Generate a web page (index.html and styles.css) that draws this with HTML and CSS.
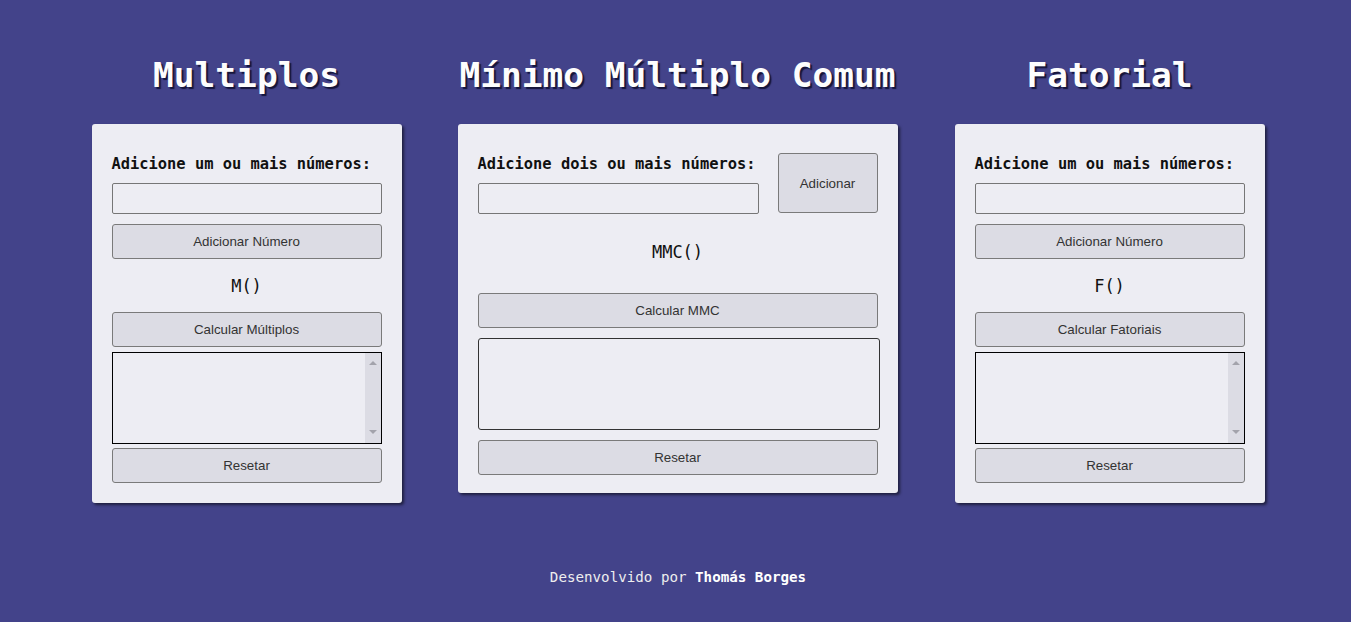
FILE: index.html
```html
<!DOCTYPE html>
<html lang="pt-BR">
<head>
<meta charset="utf-8">
<title>Calculadoras</title>
<link rel="stylesheet" href="styles.css">
</head>
<body>
<main class="page">
  <div class="columns">
    <section class="column">
      <h1 class="title">Multiplos</h1>
      <div class="card card-narrow">
        <label class="label">Adicione um ou mais números:</label>
        <input class="field" type="text">
        <button class="btn btn-add">Adicionar Número</button>
        <p class="expr">M()</p>
        <button class="btn">Calcular Múltiplos</button>
        <div class="result-box">
          <textarea class="result-area"></textarea>
          <div class="scrollbar"><span class="arrow arrow-up"></span><span class="arrow arrow-down"></span></div>
        </div>
        <button class="btn">Resetar</button>
      </div>
    </section>
    <section class="column">
      <h1 class="title">Mínimo Múltiplo Comum</h1>
      <div class="card card-wide">
        <div class="row">
          <div class="row-left">
            <label class="label">Adicione dois ou mais números:</label>
            <input class="field" type="text">
          </div>
          <button class="btn btn-square">Adicionar</button>
        </div>
        <p class="expr expr-mmc">MMC()</p>
        <button class="btn">Calcular MMC</button>
        <textarea class="result-round"></textarea>
        <button class="btn">Resetar</button>
      </div>
    </section>
    <section class="column column-last">
      <h1 class="title">Fatorial</h1>
      <div class="card card-narrow">
        <label class="label">Adicione um ou mais números:</label>
        <input class="field" type="text">
        <button class="btn btn-add">Adicionar Número</button>
        <p class="expr">F()</p>
        <button class="btn">Calcular Fatoriais</button>
        <div class="result-box">
          <textarea class="result-area"></textarea>
          <div class="scrollbar"><span class="arrow arrow-up"></span><span class="arrow arrow-down"></span></div>
        </div>
        <button class="btn">Resetar</button>
      </div>
    </section>
  </div>
  <footer class="footer">Desenvolvido por <strong class="author">Thomás Borges</strong></footer>
</main>
</body>
</html>
```
FILE: styles.css
```css
* { box-sizing: border-box; }
html, body { margin: 0; padding: 0; }
body {
  background: #43438a;
  font-family: "DejaVu Sans Mono", "Liberation Mono", monospace;
  height: 622px;
  overflow: hidden;
}
.page {
  padding: 55px 0 0 5px;
}
.columns {
  display: flex;
  justify-content: center;
  align-items: flex-start;
  gap: 56px;
}
.column {
  display: flex;
  flex-direction: column;
  align-items: center;
}
.column-last { margin-left: 1px; }
.title {
  margin: 0 0 29px;
  font-size: 34.5px;
  line-height: 40px;
  font-weight: bold;
  color: #fdfdfd;
  text-shadow: 2px 2px 1px #15153a;
  white-space: nowrap;
}
.card {
  background: #ededf3;
  border-radius: 3px;
  box-shadow: 2px 2px 3px rgba(0,0,0,0.55);
  display: flex;
  flex-direction: column;
}
.card-narrow {
  width: 310px;
  padding: 31px 20px 20px;
}
.card-wide {
  width: 440px;
  padding: 29px 20px 18px;
}
.label {
  display: block;
  font-size: 15.4px;
  line-height: 18px;
  font-weight: bold;
  color: #111;
  white-space: nowrap;
}
.field {
  display: block;
  width: 100%;
  height: 31px;
  margin-top: 10px;
  background: #ededf3;
  border: 1px solid #767676;
  border-radius: 2px;
  font-family: "Liberation Sans", Arial, sans-serif;
}
.btn {
  display: block;
  width: 100%;
  height: 35px;
  background: #dcdce4;
  border: 1px solid #7a7a7a;
  border-radius: 3px;
  font-family: "Liberation Sans", Arial, sans-serif;
  font-size: 13.333px;
  color: #333;
  padding: 0;
}
.btn-add { margin-top: 10px; }
.expr {
  margin: 17px 0 16px;
  text-align: center;
  font-size: 17px;
  line-height: 20px;
  color: #111;
}
.expr-mmc { margin: 28px 0 31px; }
.result-box {
  display: flex;
  height: 92px;
  margin: 5px 0 4px;
  border: 1px solid #000;
  background: #ededf3;
}
.result-area {
  flex: 1;
  min-width: 0;
  border: 0;
  resize: none;
  background: transparent;
  outline: none;
  font-family: "Liberation Mono", monospace;
}
.scrollbar {
  width: 16px;
  flex: none;
  background: #dcdce4;
  display: flex;
  flex-direction: column;
  justify-content: space-between;
  align-items: center;
  padding: 8px 0 9px;
}
.arrow {
  width: 0;
  height: 0;
  border-left: 4px solid transparent;
  border-right: 4px solid transparent;
}
.arrow-up { border-bottom: 4px solid #a3a3ab; }
.arrow-down { border-top: 4px solid #a3a3ab; }
.result-round {
  display: block;
  width: 402px;
  height: 92px;
  margin: 10px 0 10px;
  resize: none;
  background: #ededf3;
  border: 1px solid #333;
  border-radius: 3px;
  font-family: "Liberation Mono", monospace;
}
.row {
  display: flex;
  align-items: flex-start;
  gap: 19px;
}
.row-left {
  width: 281px;
  padding-top: 2px;
}
.btn-square {
  width: 100px;
  height: 60px;
  flex: none;
}
.footer {
  margin-top: 65px;
  text-align: center;
  font-size: 14.2px;
  line-height: 18px;
  color: #eeeeee;
}
.author {
  color: #ffffff;
  font-weight: bold;
}
```
